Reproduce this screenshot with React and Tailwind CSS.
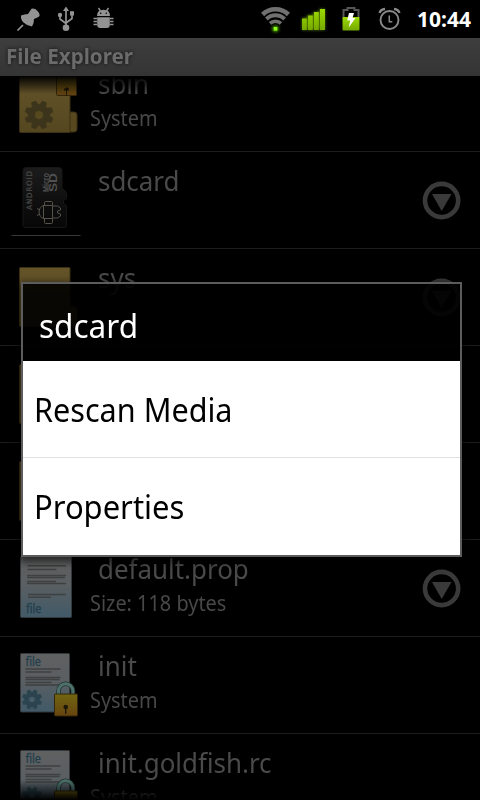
import React from "react";

const GEAR_TEETH = [0, 45, 90, 135, 180, 225, 270, 315];

function Gear({ cx, cy, r, hole, color, holeColor }) {
  return (
    <g fill={color}>
      <circle cx={cx} cy={cy} r={r * 0.74} />
      {GEAR_TEETH.map((a) => (
        <path
          key={a}
          transform={`translate(${cx} ${cy}) rotate(${a + 22.5}) scale(${r})`}
          d="M-.27-.6-.17-1h.34l.1.4Z"
        />
      ))}
      <circle cx={cx} cy={cy} r={hole} fill={holeColor} />
    </g>
  );
}

function Label({ className, children }) {
  return (
    <span className={`block w-max origin-left whitespace-nowrap ${className}`}>
      {children}
    </span>
  );
}

/* All row icons share a 90x96 canvas whose origin is the row's corner. */
function RowIcon({ children }) {
  return (
    <svg className="h-24 w-[90px] shrink-0" viewBox="0 0 90 96">
      {children}
    </svg>
  );
}

function FolderIcon({ system }) {
  return (
    <RowIcon>
      <defs>
        <linearGradient id="folder" x1="0" y1="0" x2="0" y2="1">
          <stop offset="0" stopColor="#65542a" />
          <stop offset="1" stopColor="#54471f" />
        </linearGradient>
        <linearGradient id="goldlock" x1="0" y1="0" x2="0" y2="1">
          <stop offset="0" stopColor="#706010" />
          <stop offset="1" stopColor="#604010" />
        </linearGradient>
      </defs>
      <path d="M69 57h5q3 0 3 3v14q0 3-3 3h-5Z" fill="#57481f" stroke="#3b3013" />
      <rect x="19.500" y="18.500" width="50.500" height="59" rx="1" fill="url(#folder)" stroke="#3b3013" />
      {system && (
        <>
          <Gear cx={39} cy={60} r={14.5} hole={4} color="#3d341c" holeColor="#57491f" />
          <rect x="56.500" y="17" width="20" height="23.500" rx="1" fill="url(#goldlock)" stroke="#33240a" />
          <path d="M64 33.500h2v-1h2v1h1v2h-2v5h-1v-5h-2Z" fill="#1c1608" />
        </>
      )}
    </RowIcon>
  );
}

function SdIcon() {
  return (
    <RowIcon>
      <defs>
        <linearGradient id="sd" x1="0" y1="0" x2="0" y2="1">
          <stop offset="0" stopColor="#1c1c1c" />
          <stop offset="0.5" stopColor="#101010" />
          <stop offset="1" stopColor="#070707" />
        </linearGradient>
      </defs>
      <path
        d="M26 15.500h33q3 0 3 3v17.500l4.500 4.500v6l-3 2v3l3 2v20q0 2-2 2H25q-2 0-2-2V18.500q0-3 3-3Z"
        fill="url(#sd)"
        stroke="#161616"
      />
      <text transform="translate(31.800 58) rotate(-90)" fontSize="7.500" textLength="39" fill="#4c4c4c" stroke="#4c4c4c" strokeWidth=".2" className="font-['DejaVu_Sans']">
        ANDROID
      </text>
      <g fill="#505050" className="font-['Liberation_Sans'] font-bold">
        <text transform="translate(48.500 40) rotate(-90)" fontSize="9" textLength="19" lengthAdjust="spacingAndGlyphs">Micro</text>
        <text transform="translate(57 40) rotate(-90)" fontSize="11" textLength="19" lengthAdjust="spacingAndGlyphs">SD</text>
      </g>
      <path transform="translate(0 3)" d="M43.500 50.500h9v13h-9ZM43.500 50.500q-4 1-4.500 6.500 .5 5.500 4.500 6.500M37 53.500l3 1.500M37 60.500l3-1.500M44.500 50v-2.500q0-1 1-1h6q1 0 1 1V50M44.500 64v3.500q0 1 1 1h6q1 0 1-1V64M52.500 51h5l3 2v2l-3 1v2l3 1v2l-3 2h-5" fill="none" stroke="#55534a" />
      <path d="M11.500 83.500h69" stroke="#383838" />
    </RowIcon>
  );
}

function FileIcon({ system }) {
  return (
    <RowIcon>
      <defs>
        <linearGradient id="paper" x1="0" y1="0" x2="0" y2="1">
          <stop offset="0" stopColor="#606060" />
          <stop offset="0.45" stopColor="#5a5f62" />
          <stop offset="1" stopColor="#415a68" />
        </linearGradient>
        <linearGradient id="lock" x1="0" y1="0" x2="0" y2="1">
          <stop offset="0" stopColor="#706510" />
          <stop offset="1" stopColor="#684410" />
        </linearGradient>
      </defs>
      {system ? (
        <>
          <rect x="20.500" y="16.500" width="49" height="58.500" rx="1" fill="url(#paper)" stroke="#33393c" />
          <text x="25.500" y="29" fontSize="12" textLength="15.500" lengthAdjust="spacingAndGlyphs" fill="#213f4c" stroke="#213f4c" strokeWidth=".3" className="font-['Noto_Sans']">file</text>
          <path d="M25.500 32h35M25.500 35h26M25.500 40.500h35M25.500 42.500h34M25.500 45.500h26M25.500 48h35" stroke="#3f4040" strokeWidth="1.300" />
          <Gear cx={32} cy={62.500} r={10} hole={2.800} color="#2b444f" holeColor="#485c66" />
          <path d="M58.500 57v-3a7.200 7.200 0 0 1 14.400 0v3" fill="none" stroke="#22332f" strokeWidth="4.600" />
          <path d="M58.500 57v-3a7.200 7.200 0 0 1 14.400 0v3" fill="none" stroke="#4d716b" strokeWidth="3" />
          <rect x="54.500" y="57" width="23" height="22" rx="1" fill="url(#lock)" stroke="#35260a" />
          <circle cx="65.700" cy="70" r="2.300" fill="#1c1708" />
          <path d="M65.700 70v7" stroke="#1c1708" strokeWidth="1.400" />
        </>
      ) : (
        <>
          <rect x="20.500" y="16.500" width="51" height="61" rx="1" fill="url(#paper)" stroke="#33393c" />
          <path d="M27.500 25.800h38.500M27.500 29.500h29M27 35.500h39M27 37.500h38M27 41.500h29M27 43.500h39M28 54.500h38M28 57.300h23" stroke="#3f4040" strokeWidth="1.400" />
          <text x="26" y="73" fontSize="12" textLength="15.500" lengthAdjust="spacingAndGlyphs" fill="#213f4c" stroke="#213f4c" strokeWidth=".3" className="font-['Noto_Sans']">file</text>
        </>
      )}
    </RowIcon>
  );
}

function MoreButton() {
  return (
    <svg className="mr-[18px] mt-[29px] size-[40px] shrink-0" viewBox="0 0 40 40">
      <circle cx="19.600" cy="19.500" r="16.600" fill="none" stroke="#3a3a3a" strokeWidth="4.600" />
      <path d="M10 13h19.500L19.700 30Z" fill="#3a3a3a" />
    </svg>
  );
}

const rows = [
  { name: "sbin", info: "System", icon: <FolderIcon system /> },
  { name: "sdcard", icon: <SdIcon />, more: true },
  { name: "sys", icon: <FolderIcon />, more: true },
  { name: "", icon: <FolderIcon /> },
  { name: "", icon: <FolderIcon /> },
  { name: "default.prop", info: "Size: 118 bytes", icon: <FileIcon />, more: true },
  { name: "init", info: "System", icon: <FileIcon system /> },
  { name: "init.goldfish.rc", info: "System", icon: <FileIcon system /> },
];

function FileRow({ name, info, icon, more }) {
  return (
    <li className="flex h-[97px] shrink-0 border-b border-[#1c1c1c]">
      {icon}
      <div className="min-w-0 flex-1 pt-[11px]">
        <Label className="ml-2 h-[37px] scale-x-[0.96] text-[27px] leading-[36px] text-[#4a4a4a]">{name}</Label>
        {info && (
          <Label className="scale-x-[0.925] text-[21.500px] leading-[29px] text-[#484848]">{info}</Label>
        )}
      </div>
      {more && <MoreButton />}
    </li>
  );
}

function StatusBar() {
  return (
    <header className="flex h-[38px] shrink-0 items-center bg-black">
      <svg className="h-[38px] w-[120px]" viewBox="0 0 120 38" fill="#939393">
        <path d="M31.500 8.800Q35 7.500 38 11.500T38.500 17l-4.500 2q0 5-2 7.500-5.500-1-8.500-4t-2.500-7q3.500-1.500 7-1.500Z" />
        <path d="m23 25-5.500 5.500" stroke="#939393" strokeWidth="1.700" />
        <path d="M66 6.500 69 11h-6Z" />
        <path d="M66 9v18M60 16v3l6 4.500M72 15v3.500l-6 4.500" fill="none" stroke="#939393" strokeWidth="1.700" />
        <circle cx="66" cy="27.700" r="3.300" />
        <circle cx="60" cy="15" r="2.200" />
        <path d="M70 11.200h4v4.300h-4Z" />
        <path d="M97 16q0-6.200 6.500-6.200t6.500 6.200ZM97.200 17.200h12.600V25q0 3-3 3h-6.600q-3 0-3-3Z" />
        <path d="m98.500 8 2 3M108.500 8l-2 3M97 18.500h-3.500M97 21.500h-3.500M97 24.500h-3.500M110 18.500h3.500M110 21.500h3.500M110 24.500h3.500" fill="none" stroke="#939393" strokeWidth="1.400" />
        <circle cx="100.700" cy="13.200" r=".8" fill="#000" />
        <circle cx="106.300" cy="13.200" r=".8" fill="#000" />
      </svg>
      <svg className="ml-auto h-[38px] w-[150px]" viewBox="258 0 150 38">
        <defs>
          <linearGradient id="sig" x1="0" y1="0" x2="0" y2="1">
            <stop offset="0" stopColor="#9adb00" />
            <stop offset="1" stopColor="#76a800" />
          </linearGradient>
          <filter id="glow" x="-50%" y="-50%" width="200%" height="200%">
            <feGaussianBlur stdDeviation="1.400" />
          </filter>
        </defs>
        <g fill="none" stroke="#707070">
          <path d="M262.600 14.500a18.500 18.500 0 0 1 25.800 0" strokeWidth="4.600" />
          <path d="M266.400 19a13 13 0 0 1 18.200 0" strokeWidth="4" />
          <path d="M270 23.400a8 8 0 0 1 11 0" strokeWidth="3.600" />
        </g>
        <circle cx="275.500" cy="28.700" r="3.300" fill="#4c9f00" filter="url(#glow)" />
        <rect x="273.700" y="27" width="3.600" height="3.600" fill="#8cff1a" />
        <path d="M302 18h5v-3h6v-3h6V9h6v21h-23Z" fill="#6c9b00" opacity=".75" filter="url(#glow)" />
        <path d="M302 18.500h4.800V30H302ZM308 15.500h4.800V30H308ZM314 12h4.800v18H314ZM320 9h5v21h-5Z" fill="url(#sig)" />
        <path d="M343.500 18v-8h4V8h7v2h4v8" fill="none" stroke="#555" strokeWidth="2" />
        <rect x="342.500" y="17" width="17" height="13.500" rx="1" fill="url(#sig)" />
        <path d="M349 13h5l-1.500 5h3l-6.800 9.500 1.500-7h-3Z" fill="#fff" />
        <g fill="none" stroke="#8a8a8a">
          <circle cx="389.500" cy="20" r="9" strokeWidth="1.900" />
          <path d="M389.300 15.500v6.300h3" strokeWidth="1.500" />
          <path d="M379.500 13q1-3.500 5.500-4M399.500 13q-1-3.500-5.500-4" strokeWidth="2.300" />
        </g>
      </svg>
      <div className="w-[72px] pl-[9px]">
        <Label className="text-[21px] font-bold leading-[36px] text-white">10:44</Label>
      </div>
    </header>
  );
}

export default function App() {
  return (
    <div className="relative flex h-[800px] w-[480px] flex-col overflow-hidden bg-black font-['Noto_Sans',sans-serif]">
      <StatusBar />
      <div className="h-[38px] shrink-0 bg-linear-to-b from-[#3e3e3e] to-[#343434] pl-[6px]">
        <Label className="scale-x-[0.98] text-[21px] font-bold leading-[36px] text-[#6b6b6b] [text-shadow:0_0_4px_#111]">File Explorer</Label>
      </div>
      <div className="relative min-h-0 flex-1 overflow-hidden">
        <ul className="-mt-[21px] flex flex-col">
          {rows.map((r, i) => (
            <FileRow key={i} {...r} />
          ))}
        </ul>
        <div className="absolute inset-x-0 top-0 h-[18px] bg-linear-to-b from-black to-transparent" />
        <div className="absolute inset-x-0 bottom-0 h-[20px] bg-linear-to-t from-black to-transparent" />
      </div>
      <section className="absolute left-[21px] top-[282px] w-[441px] border-2 border-[#5c5c5c] shadow-[0_3px_8px_2px_rgba(0,0,0,0.6)]">
        <div className="h-[77px] bg-black/90 pl-4 pt-[18px]">
          <Label className="scale-x-[0.955] text-[33px] leading-[48px] text-white">sdcard</Label>
        </div>
        <div className="h-[97px] border-b border-[#e0e0e0] bg-white pl-[10.5px] pt-[25px]">
          <Label className="scale-x-[0.927] text-[33px] leading-[48px] text-black">Rescan Media</Label>
        </div>
        <div className="h-[97px] bg-white pl-[10.5px] pt-[25px]">
          <Label className="scale-x-[0.938] text-[33px] leading-[48px] text-black">Properties</Label>
        </div>
      </section>
    </div>
  );
}
